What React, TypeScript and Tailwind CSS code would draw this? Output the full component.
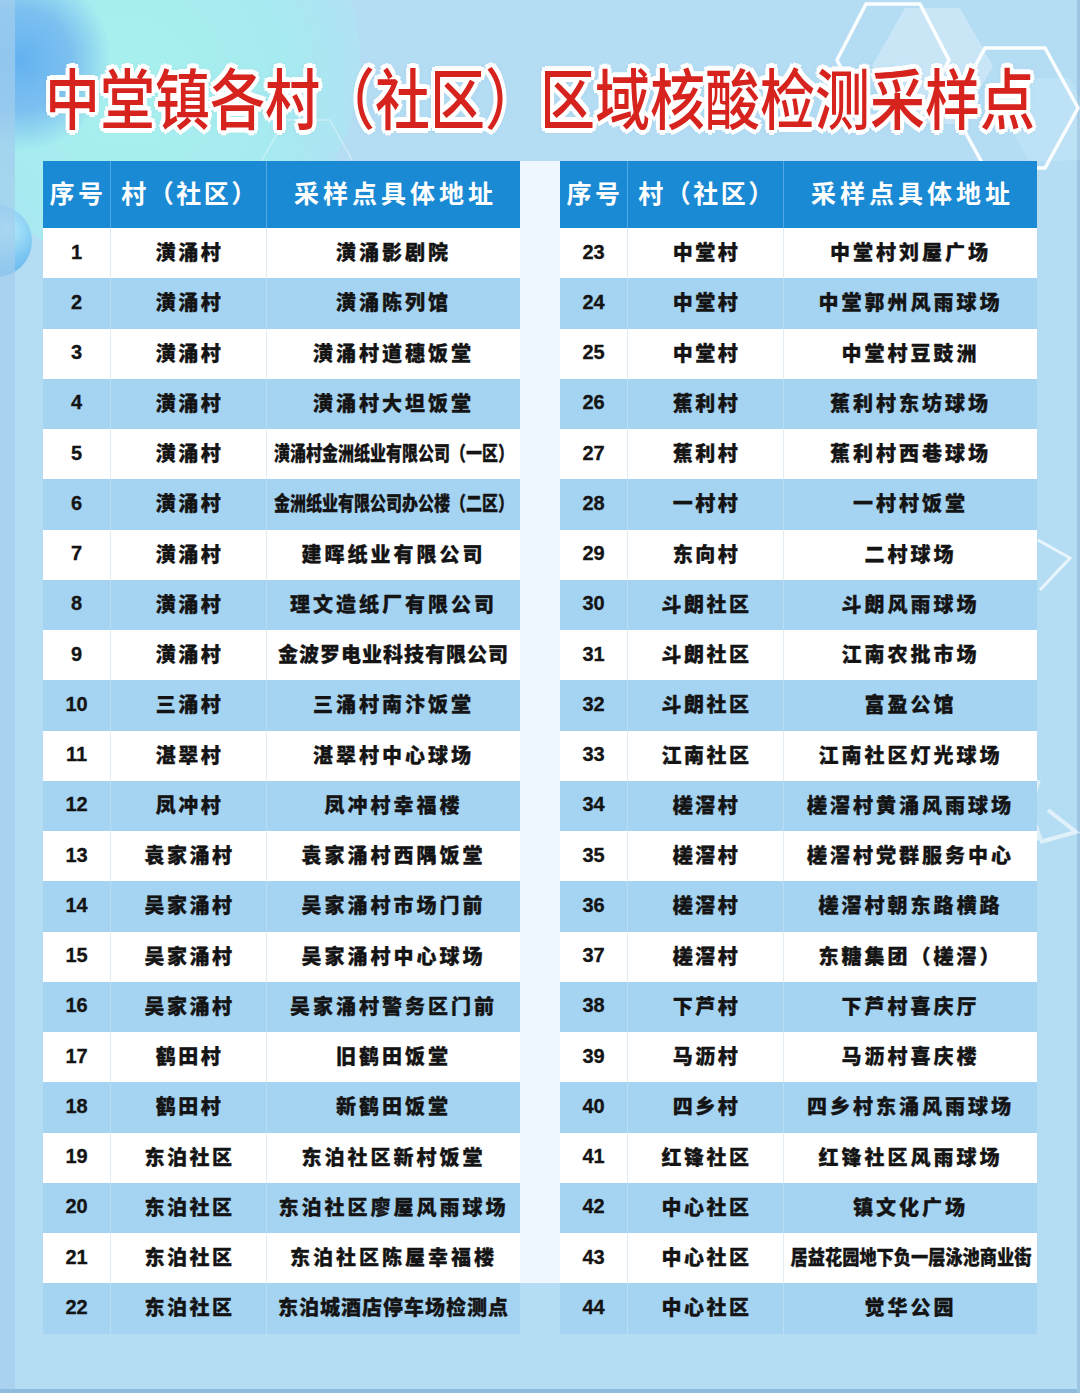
import React from "react";

type Row = [string, string, string, string?];

const left: Row[] = [
  ["1", "潢涌村", "潢涌影剧院"],
  ["2", "潢涌村", "潢涌陈列馆"],
  ["3", "潢涌村", "潢涌村道穗饭堂"],
  ["4", "潢涌村", "潢涌村大坦饭堂"],
  ["5", "潢涌村", "潢涌村金洲纸业有限公司（一区）", "c78"],
  ["6", "潢涌村", "金洲纸业有限公司办公楼（二区）", "c78"],
  ["7", "潢涌村", "建晖纸业有限公司"],
  ["8", "潢涌村", "理文造纸厂有限公司"],
  ["9", "潢涌村", "金波罗电业科技有限公司", "t1"],
  ["10", "三涌村", "三涌村南汴饭堂"],
  ["11", "湛翠村", "湛翠村中心球场"],
  ["12", "凤冲村", "凤冲村幸福楼"],
  ["13", "袁家涌村", "袁家涌村西隅饭堂"],
  ["14", "吴家涌村", "吴家涌村市场门前"],
  ["15", "吴家涌村", "吴家涌村中心球场"],
  ["16", "吴家涌村", "吴家涌村警务区门前"],
  ["17", "鹤田村", "旧鹤田饭堂"],
  ["18", "鹤田村", "新鹤田饭堂"],
  ["19", "东泊社区", "东泊社区新村饭堂"],
  ["20", "东泊社区", "东泊社区廖屋风雨球场"],
  ["21", "东泊社区", "东泊社区陈屋幸福楼"],
  ["22", "东泊社区", "东泊城酒店停车场检测点", "t1"],
];

const right: Row[] = [
  ["23", "中堂村", "中堂村刘屋广场"],
  ["24", "中堂村", "中堂郭州风雨球场"],
  ["25", "中堂村", "中堂村豆豉洲"],
  ["26", "蕉利村", "蕉利村东坊球场"],
  ["27", "蕉利村", "蕉利村西巷球场"],
  ["28", "一村村", "一村村饭堂"],
  ["29", "东向村", "二村球场"],
  ["30", "斗朗社区", "斗朗风雨球场"],
  ["31", "斗朗社区", "江南农批市场"],
  ["32", "斗朗社区", "富盈公馆"],
  ["33", "江南社区", "江南社区灯光球场"],
  ["34", "槎滘村", "槎滘村黄涌风雨球场"],
  ["35", "槎滘村", "槎滘村党群服务中心"],
  ["36", "槎滘村", "槎滘村朝东路横路"],
  ["37", "槎滘村", "东糖集团（槎滘）"],
  ["38", "下芦村", "下芦村喜庆厅"],
  ["39", "马沥村", "马沥村喜庆楼"],
  ["40", "四乡村", "四乡村东涌风雨球场"],
  ["41", "红锋社区", "红锋社区风雨球场"],
  ["42", "中心社区", "镇文化广场"],
  ["43", "中心社区", "居益花园地下负一层泳池商业街", "c86"],
  ["44", "中心社区", "觉华公园"],
];

function Address({ text, mode }: { text: string; mode?: string }) {
  if (mode === "c78") {
    return (
      <span className="inline-block shrink-0 whitespace-nowrap scale-x-[0.8] tracking-[0px]">
        {text}
      </span>
    );
  }
  if (mode === "c86") {
    return (
      <span className="inline-block shrink-0 whitespace-nowrap scale-x-[0.86] tracking-[0px]">
        {text}
      </span>
    );
  }
  if (mode === "t1") {
    return <span className="whitespace-nowrap tracking-[1px]">{text}</span>;
  }
  return <span className="whitespace-nowrap tracking-[3px]">{text}</span>;
}

function Table({ rows }: { rows: Row[] }) {
  return (
    <div className="w-[477px] shrink-0">
      <div className="flex h-[67px] bg-[#1b8ad4] text-[25px] font-bold text-white">
        <div className="flex w-[68px] items-center justify-center border-r border-[#52a8e2] pl-[3px] tracking-[3.5px]">
          序号
        </div>
        <div className="flex w-[156px] items-center justify-center border-r border-[#52a8e2] pl-[3px] tracking-[2.5px]">
          村（社区）
        </div>
        <div className="flex flex-1 items-center justify-center pl-[4px] tracking-[4px]">
          采样点具体地址
        </div>
      </div>
      {rows.map((r, i) => {
        const white = i % 2 === 0;
        return (
          <div
            key={r[0]}
            className={
              white
                ? "flex h-[50.25px] bg-white text-[20px] font-black text-[#141414] [-webkit-text-stroke:0.3px_#141414]"
                : "flex h-[50.25px] bg-[#a5d3f2] text-[20px] font-black text-[#141414] [-webkit-text-stroke:0.3px_#141414]"
            }
          >
            <div
              className={
                white
                  ? "flex w-[68px] items-center justify-center border-r border-[#e2ecf4] pb-[3px]"
                  : "flex w-[68px] items-center justify-center border-r border-[#b9ddf5] pb-[3px]"
              }
            >
              {r[0]}
            </div>
            <div
              className={
                white
                  ? "flex w-[156px] items-center justify-center border-r border-[#e2ecf4] pl-[2px] tracking-[2.5px]"
                  : "flex w-[156px] items-center justify-center border-r border-[#b9ddf5] pl-[2px] tracking-[2.5px]"
              }
            >
              {r[1]}
            </div>
            <div className="flex min-w-0 flex-1 items-center justify-center">
              <Address text={r[2]} mode={r[3]} />
            </div>
          </div>
        );
      })}
    </div>
  );
}

function Decor() {
  return (
    <div className="pointer-events-none absolute inset-0">
      <div className="absolute left-[-60px] top-[-150px] h-[420px] w-[420px] rounded-full bg-[radial-gradient(circle_at_45%_55%,#a8f0ef_0%,#a6ebf0_45%,#b0e2f3_72%,#b4ddf4_100%)]" />
      <div className="absolute left-[-70px] top-[-30px] h-[180px] w-[180px] rounded-full bg-[radial-gradient(circle,#64b2f0_0%,#7cc0f0_40%,rgba(150,205,243,0)_72%)]" />
      <div className="absolute left-[-40px] top-[205px] h-[72px] w-[72px] rounded-full bg-[radial-gradient(circle_at_65%_35%,#b7ecfa_0%,#7cc7f2_45%,#4a9fe6_100%)]" />
      <div className="absolute left-0 top-0 h-full w-[15px] bg-[#a2cdec]/70" />
      <div className="absolute bottom-0 left-0 h-[4px] w-full bg-[#8fbcdc]" />
      <div className="absolute right-0 top-0 h-full w-[3px] bg-[#9cc6e3]" />
      <svg className="absolute left-0 top-0" width="1080" height="400" viewBox="0 0 1080 400">
        <polygon points="872,66 905,8 960,8 993,66 960,124 905,124" fill="#ffffff" fillOpacity="0.28" />
        <polygon points="837,60 866,4 920,4 949,60 920,116 866,116" fill="none" stroke="#ffffff" strokeWidth="3.5" strokeOpacity="0.95" />
        <polygon points="952,108 985,48 1045,48 1078,108 1045,168 985,168" fill="none" stroke="#ffffff" strokeWidth="3.5" strokeOpacity="0.95" />
        <polygon points="1005,120 1030,78 1070,78 1080,100 1080,160 1030,162" fill="#ffffff" fillOpacity="0.12" />
        <polygon points="262,160 285,120 330,120 352,160 330,200 285,200" fill="none" stroke="#ffffff" strokeWidth="1.5" strokeOpacity="0.35" />
      </svg>
      <svg className="absolute left-[1020px] top-[530px]" width="60" height="80" viewBox="0 0 60 80">
        <path d="M18 10 L50 28 L20 60" fill="none" stroke="#ffffff" strokeOpacity="0.7" strokeWidth="3" />
      </svg>
      <svg className="absolute left-[1018px] top-[770px]" width="62" height="110" viewBox="0 0 62 110">
        <path d="M20 10 Q8 40 22 70" fill="none" stroke="#ffffff" strokeOpacity="0.55" strokeWidth="6" />
        <path d="M22 72 L58 62 L30 40" fill="none" stroke="#ffffff" strokeOpacity="0.6" strokeWidth="4" />
      </svg>
    </div>
  );
}

export default function App() {
  return (
    <div className="relative h-[1393px] w-[1080px] overflow-hidden bg-[#b4ddf4] [font-family:'Liberation_Sans','Noto_Sans_CJK_SC',sans-serif]">
      <Decor />
      <div className="relative z-10 flex h-[161px] items-center justify-center pt-[30px]">
        <h1 className="scale-y-[1.2] whitespace-nowrap text-[55px] font-medium leading-none text-[#d6231d] [font-family:'Noto_Sans_CJK_SC',sans-serif] [text-shadow:3px_0_0_#fff,-3px_0_0_#fff,0_3px_0_#fff,0_-3px_0_#fff,2px_2px_0_#fff,-2px_-2px_0_#fff,2px_-2px_0_#fff,-2px_2px_0_#fff,4px_0_0_#fff,-4px_0_0_#fff,0_4px_0_#fff,0_-4px_0_#fff,3px_3px_0_#fff,-3px_-3px_0_#fff,3px_-3px_0_#fff,-3px_3px_0_#fff,0_0_6px_rgba(120,150,180,0.5)]">
          中堂镇各村（社区）区域核酸检测采样点
        </h1>
      </div>
      <div className="relative z-10 flex px-[43px]">
        <Table rows={left} />
        <div className="w-[40px] shrink-0">
          <div className="h-[1122px] bg-[#eef7fd]" />
        </div>
        <Table rows={right} />
      </div>
    </div>
  );
}
